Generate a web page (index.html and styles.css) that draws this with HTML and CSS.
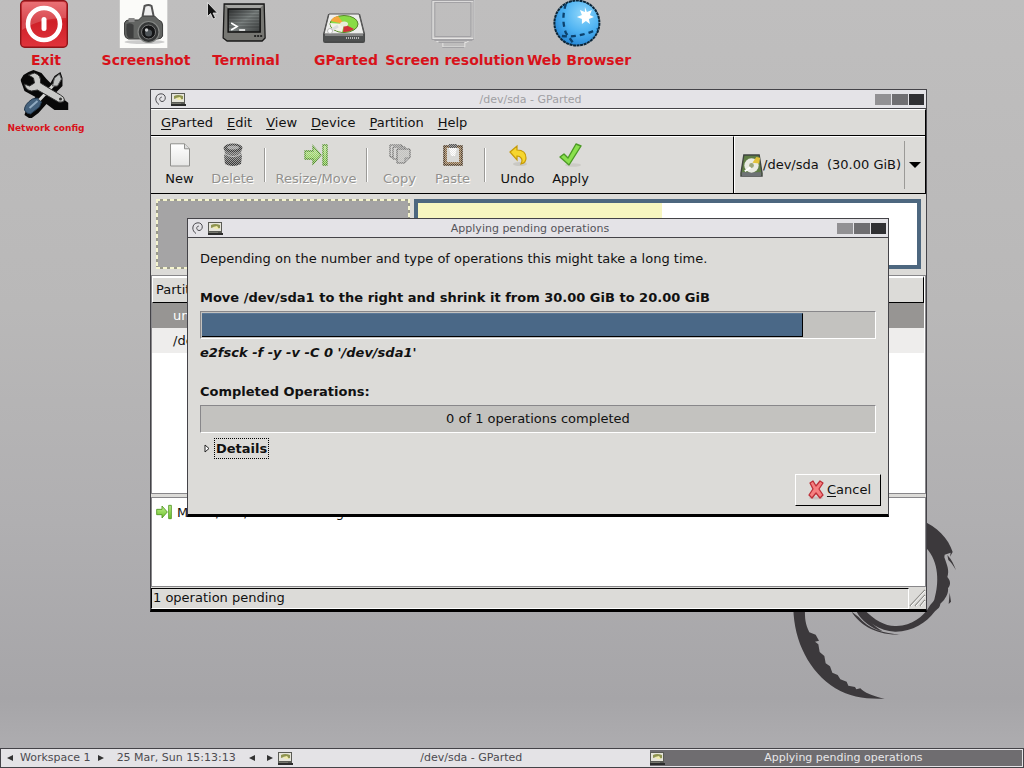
FILE: index.html
```html
<!DOCTYPE html>
<html lang="en">
<head>
<meta charset="utf-8">
<title>GParted</title>
<link rel="stylesheet" href="styles.css">
</head>
<body>
<svg class="defs" width="0" height="0" aria-hidden="true">
  <defs>
    <pattern id="dither" width="2" height="2" patternUnits="userSpaceOnUse"><path d="M0 0h1v1H0zM1 1h1v1H1z" fill="#dcdbd8" shape-rendering="crispEdges"/></pattern>
    <linearGradient id="red" x1="0" y1="0" x2="0" y2="1"><stop offset="0" stop-color="#e8555a"/><stop offset=".45" stop-color="#cf2028"/><stop offset="1" stop-color="#e0343c"/></linearGradient>
    <linearGradient id="dark" x1="0" y1="0" x2="0" y2="1"><stop offset="0" stop-color="#7c7c7c"/><stop offset="1" stop-color="#2b2b2b"/></linearGradient>
    <linearGradient id="screen" x1="0" y1="0" x2="1" y2="1"><stop offset="0" stop-color="#303232"/><stop offset=".5" stop-color="#7d8382"/><stop offset="1" stop-color="#3c3f3f"/></linearGradient>
    <radialGradient id="globe" cx=".62" cy=".3" r=".75"><stop offset="0" stop-color="#8ed6fb"/><stop offset=".55" stop-color="#4db2f2"/><stop offset="1" stop-color="#2384d4"/></radialGradient>
    <linearGradient id="green" x1="0" y1="0" x2="0" y2="1"><stop offset="0" stop-color="#c0f08c"/><stop offset="1" stop-color="#6bc22b"/></linearGradient>
    <linearGradient id="paper" x1="0" y1="0" x2="0" y2="1"><stop offset="0" stop-color="#fff"/><stop offset="1" stop-color="#e6e6e4"/></linearGradient>
    <symbol id="swirl" viewBox="0 0 11 12"><path d="M4 11.500C1.800 10 .8 8 .8 6C.8 3 3 .8 6 .8C8.600.8 10.300 2.500 10.300 4.800C10.300 7.200 8.600 8.600 7 8.500C5.300 8.400 4.500 7 4.800 5.600C5.100 4.500 6 4 6.900 4.200" fill="none" stroke="#4c4b50" stroke-width="1"/></symbol>
    <symbol id="app" viewBox="0 0 15 13"><path d="M0 0h14v12H0z" fill="#5a5b55"/><path d="M1 1h12v8H1z" fill="#e6e5da"/><path d="M3 3q4-2 9 0v3l-3 1-3-2-3 1z" fill="#8f9450"/><path d="M5 5l4-1 2 3H7z" fill="#f0ecae"/><path d="M1 10h9v1H1z" fill="#77786f"/><path d="M0 11h15v2H0z" fill="#2c2c2c"/></symbol>
    <symbol id="move" viewBox="0 0 24 24"><path d="M1 8h8V3l8 9-8 9v-5H1z" fill="url(#green)" stroke="#4f9422" stroke-width="1.300"/><path d="M19 2h4v20h-4z" fill="url(#green)" stroke="#4f9422" stroke-width="1.300"/></symbol>
  </defs>
</svg>
<main class="desktop">
  <svg class="wallpaper" viewBox="0 0 732 750" aria-hidden="true">
    <g fill="#3c393c">
      <path d="M425 182C470 198 506 236 518 276L510 290L512 278L494 284L493 292C501 315 509 332 502 351C514 364 511 378 504 384C506 399 498 411 492 420L481 431C480 445 470 447 463 456C440 488 395 516 345 515C298 512 263 488 235 450L252 448C285 483 318 500 350 498C396 497 431 469 447 441C453 430 463 425 464 414C476 372 479 306 438 263C415 240 400 220 390 210Z"/>
      <path d="M502 285C515 299 522 314 528 331C519 315 513 307 505 300ZM509 398L513 425L506 432Z"/>
      <path d="M215 455C236 491 287 527 362 523C311 520 266 508 235 470ZM230 455C243 480 275 507 308 514C277 494 259 475 245 452Z"/>
      <path d="M40 445C42 545 88 636 166 685C211 711 256 718 314 716C277 709 252 697 241 685L229 688L225 681L205 677L200 665L181 658L173 645L157 638L150 619L137 610L133 588L119 576L115 553L105 545L117 542L107 524L88 517C76 493 74 475 75 445Z"/>
    </g>
  </svg>

  <nav aria-label="Desktop">
    <a class="launcher exit" href="#exit"><svg viewBox="0 0 48 48"><rect x=".7" y=".7" width="46.600" height="46.600" rx="4" fill="url(#red)" stroke="#8e1519" stroke-width="1.400"/><path d="M2 6q0-4 4-4h36q4 0 4 4v12Q20 18 2 30z" fill="#fff" opacity=".18"/><circle cx="24" cy="24" r="16" fill="none" stroke="#fff" stroke-width="4.500"/><path d="M24 19.500v9" stroke="#fff" stroke-width="5" stroke-linecap="round"/></svg><span>Exit</span></a>
    <a class="launcher shot" href="#screenshot"><svg viewBox="0 0 48 48"><path d="M0 0h48v48H0z" fill="#fbfbf9"/><ellipse cx="25" cy="42" rx="20" ry="2" fill="#ccc"/><path d="M23 16l2-10q4-2 7 0l2 10" fill="#eee" stroke="#555" stroke-width="2"/><path d="M5 23q1-3 4-3h10l4-4h12l4 4q4 1 4 5v11q-1 3-5 3H9q-4-1-4-5z" fill="#626462" stroke="#3a3b3a"/><path d="M9 18h6v4H9z" fill="#888"/><path d="M7 24q4-2 7 1v13H9q-3-2-2-14z" fill="#3d3e3e"/><circle cx="29" cy="32" r="10.500" fill="#363838" stroke="#858785" stroke-width="1.200"/><circle cx="29" cy="32" r="7" fill="#141516" stroke="#777"/><circle cx="29" cy="33" r="3.500" fill="#4d5357"/><circle cx="27" cy="30" r="1.700" fill="#c8cacc"/></svg><span>Screenshot</span></a>
    <a class="launcher term" href="#terminal"><svg viewBox="0 0 48 48"><path d="M4 4h40l1 34-3 3H7l-4-3z" fill="#777773" stroke="#191919" stroke-width="1.300"/><path d="M5 5h38l-3 3H8z" fill="#a5a5a2"/><path d="M8 9h32v23H8z" fill="url(#screen)" stroke="#111" stroke-width="1.500"/><path d="M9 12h30M9 15h30M9 18h30M9 21h30M9 24h30M9 27h30" stroke="#202323" opacity=".4"/><path d="M11 23l6 3.500-6 3.500M19 30h6" stroke="#fff" stroke-width="1.600" fill="none"/><path d="M34 36h8" stroke="#252525" stroke-width="2" stroke-dasharray="2 1"/></svg><span>Terminal</span></a>
    <a class="launcher gp" href="#gparted"><svg viewBox="0 0 48 48"><path d="M8 14h32l5 20v7q0 2-2 2H5q-2 0-2-2v-7z" fill="#494a4a"/><path d="M9 14h30l5 20H4z" fill="#eeeeec" stroke="#555" stroke-width="1"/><path d="M4 35h40v6H4z" fill="#4e5050"/><path d="M5 35h38" stroke="#bbb"/><ellipse cx="24" cy="24" rx="14" ry="8.500" fill="#88dc45" stroke="#57822d"/><path d="M24 24L11 21q1-4 7-5z" fill="#f6a63d"/><path d="M24 24l-14-1q0 7 12 9z" fill="#f4f1ea"/><path d="M24 24l-1 8q7 0 11-3z" fill="#cf3038"/><ellipse cx="24" cy="24" rx="4" ry="2.500" fill="#e7edd8"/><path d="M10 31l8-5" stroke="#ddd" stroke-width="3"/><circle cx="10" cy="31" r="2.500" fill="#fff" stroke="#999" stroke-width=".6"/><path d="M26 38h14" stroke="#bbb" stroke-width="2" stroke-dasharray="1 1"/></svg><span>GParted</span></a>
    <a class="launcher res" href="#resolution"><svg viewBox="0 0 48 48" fill="none" stroke-width="1"><path d="M3.500 1v37.500h41V1z" stroke="#e5e4e3" stroke-width="1.500"/><path d="M2.500.5v39h42V.5zM5.500 2.500v34h36v-34z" stroke="#a3a2a5"/><path d="M6 40.500h34l-3 2H10zM13.500 43v4h22v-4" stroke="#e5e4e3"/><path d="M5 40.500h38M9 42.500h26M13 47.500h22" stroke="#a3a2a5"/></svg><span>Screen resolution</span></a>
    <a class="launcher web" href="#browser"><svg viewBox="0 0 48 48"><circle cx="24" cy="23" r="22.500" fill="url(#globe)" stroke="#0b2639" stroke-width="2" stroke-dasharray="3 .6"/><path d="M13 4q-5 15 0 29l8 11M9 36q17 2 36-7" fill="none" stroke="#0c426e" stroke-width="2.300" stroke-dasharray="5 4"/><path d="M32 7l2 5 5-2-2 5 4 2-5 2 1 5-4-3-4 3v-5l-5-2 5-2-2-5 5 2z" fill="#fff"/></svg><span>Web Browser</span></a>
    <a class="launcher net" href="#network"><svg viewBox="0 0 48 48"><path d="M0 10l3-5 5-3 5-2 8 3 5 6 4 4 4-7 6-4 2 6 0 8-7 7 13 10v7H34l-8-6-8 9-8 6-6-4 3-10 8-8L4 21z" fill="#080808"/><path d="M4 40q0-6 8-11l5-1 4 4-2 5-9 7q-4 0-6-4z" fill="#45627d" stroke="#23394e"/><path d="M9 38l8-7" stroke="#91abc1" stroke-width="2"/><path d="M19 30l14-15" stroke="#d4d5d3" stroke-width="3"/><path d="M32 16l2-8 5-4 2 5-4 7z" fill="#bfc1c0" stroke="#555"/><path d="M8 5l5 3 1 5-5 3-5-2q1 6 7 7l6-1 21 12q5 1 6-2 0-3-4-5L20 13q1-8-6-10z" fill="#c9cac8" stroke="#333"/><circle cx="40" cy="29" r="1.500" fill="#333"/></svg><span>Network config</span></a>
  </nav>

  <section class="window main-window" aria-label="/dev/sda - GParted">
    <header class="titlebar inactive"><svg class="swirl"><use href="#swirl"/></svg><svg class="app"><use href="#app"/></svg><h1>/dev/sda - GParted</h1><div class="winbtns"><button aria-label="Minimize"></button><button aria-label="Maximize"></button><button aria-label="Close"></button></div></header>
    <nav class="menubar" aria-label="Menu"><button><u>G</u>Parted</button><button><u>E</u>dit</button><button><u>V</u>iew</button><button><u>D</u>evice</button><button><u>P</u>artition</button><button><u>H</u>elp</button></nav>
    <div class="toolrow">
      <div class="toolbar">
        <button><svg viewBox="0 0 24 24"><path d="M2.500.8h14l5 5V23h-19z" fill="url(#paper)" stroke="#8f8f8c"/><path d="M16.500.8v5h5" fill="#ddd" stroke="#8f8f8c"/></svg>New</button>
        <button disabled><svg viewBox="0 0 24 24"><path d="M3 6l1 4-1 3 1 8q8 4 16 0l1-8-1-3 1-4z" fill="url(#dark)"/><ellipse cx="12" cy="5" rx="9.500" ry="4.500" fill="#3d3d3d"/><ellipse cx="12" cy="4.500" rx="6" ry="2" fill="#999"/><path d="M4 11q8 5 16 0" stroke="#bbb" fill="none"/><path d="M0 0h24v24H0z" fill="url(#dither)" opacity=".6"/></svg>Delete</button>
        <i class="sep"></i>
        <button class="wide" disabled><svg viewBox="0 0 24 24"><use href="#move" width="24" height="24"/><path d="M0 0h24v24H0z" fill="url(#dither)" opacity=".7"/></svg>Resize/Move</button>
        <i class="sep"></i>
        <button disabled><svg viewBox="0 0 24 24"><path d="M2 2h12v12H2z" fill="#d2d2d0" stroke="#555"/><path d="M5 4h12v12H5z" fill="#d2d2d0" stroke="#555"/><path d="M9 6h13v9l-5 5H9z" fill="#c2c2c0" stroke="#555"/><path d="M17 20v-5h5" fill="#aaa" stroke="#777"/><path d="M0 0h24v24H0z" fill="url(#dither)" opacity=".6"/></svg>Copy</button>
        <button disabled><svg viewBox="0 0 24 24"><path d="M3 3h18v19H3z" fill="#8a6a45" stroke="#453018" stroke-width="1.500"/><path d="M6 5h12v14H6z" fill="#d8d8d6"/><path d="M8 5h8l-2 8h-4z" fill="#fff"/><path d="M8 1h8v4H8z" fill="#555"/><path d="M0 0h24v24H0z" fill="url(#dither)" opacity=".6"/></svg>Paste</button>
        <i class="sep"></i>
        <button><svg viewBox="0 0 24 24"><ellipse cx="14" cy="21" rx="7" ry="2" fill="#c9c8c3"/><path d="M4 9l7-6v4q9 0 9 8 0 5-5 6 2-4 0-6-1-2-4-2v4z" fill="#f6d62e" stroke="#c69a08" stroke-width="1.200"/></svg>Undo</button>
        <button><svg viewBox="0 0 24 24"><ellipse cx="14" cy="22" rx="8" ry="1.700" fill="#cccbc6"/><path d="M1 14l4-3 4 4 8-14 5 2-12 19z" fill="#8be04e" stroke="#4c9a25" stroke-width="1.400" stroke-linejoin="round"/></svg>Apply</button>
      </div>
      <label class="device"><svg viewBox="0 0 24 24"><path d="M4 1h16l3 19v3H1v-3z" fill="#5f7d45" stroke="#3f4440" stroke-width="1.400"/><path d="M2 19h20v4H2z" fill="#6e7275"/><circle cx="12" cy="12" r="7.500" fill="#e9ebe3"/><path d="M13 9l4-6 4 1-1 6z" fill="#e3c33a"/><circle cx="12" cy="12" r="2.500" fill="#9aa57c"/><path d="M5 18l6-4" stroke="#fff" stroke-width="2"/></svg><select aria-label="Device"><option>/dev/sda &nbsp;(30.00 GiB)</option></select><span class="arrow"></span></label>
    </div>
    <div class="disk"><div class="unalloc"></div><div class="sda1"><div class="used"></div></div></div>
    <div class="tree">
      <table><thead><tr><th>Partition</th></tr></thead><tbody><tr class="selected"><td>unallocated</td></tr><tr class="alt"><td>/dev/sda1</td></tr></tbody></table>
    </div>
    <div class="oplist"><svg><use href="#move"/></svg><span>Move /dev/sda1 to the right and shrink it from 30.00 GiB to 20.00 GiB</span></div>
    <footer class="status"><span>1 operation pending</span><svg viewBox="0 0 17 19"><path d="M1 18L16 2M6 18L16 7M11 18l5-6" stroke="#8d8c88" stroke-width="1.300"/><path d="M2 18L16 3M7 18l9-10M12 18l4-5" stroke="#fff"/></svg></footer>
  </section>

  <section class="window dialog" role="dialog" aria-label="Applying pending operations">
    <header class="titlebar"><svg class="swirl"><use href="#swirl"/></svg><svg class="app"><use href="#app"/></svg><h2>Applying pending operations</h2><div class="winbtns"><button aria-label="Minimize"></button><button aria-label="Maximize"></button><button aria-label="Close"></button></div></header>
    <div class="body">
      <p>Depending on the number and type of operations this might take a long time.</p>
      <h3>Move /dev/sda1 to the right and shrink it from 30.00 GiB to 20.00 GiB</h3>
      <div class="bar" role="progressbar" aria-label="Current operation" aria-valuenow="89"><div class="fill" style="width:89.400%"></div></div>
      <p class="cmd">e2fsck -f -y -v -C 0 '/dev/sda1'</p>
      <h3>Completed Operations:</h3>
      <div class="bar" role="progressbar" aria-label="Completed operations" aria-valuenow="0"><span>0 of 1 operations completed</span></div>
      <button class="details"><svg viewBox="0 0 6 9"><path d="M1 1v7l4-3.500z" fill="#fff" stroke="#222"/></svg><b>Details</b></button>
      <div class="actions"><button class="cancel"><svg viewBox="0 0 18 20"><ellipse cx="9" cy="18" rx="7" ry="1.500" fill="#c9bfbd"/><path d="M3 3l3-2 3 5 4-5 3 2-4 6 4 6-3 3-4-5-4 5-3-3 4-6z" fill="#f67f80" stroke="#bd2f38" stroke-width="1.300" stroke-linejoin="round"/></svg><span><u>C</u>ancel</span></button></div>
    </div>
  </section>

  <svg class="pointer" viewBox="0 0 12 18" aria-hidden="true"><path d="M.5.5v14l3-3 2.500 5.500 2.500-1-2.500-5h4.500z" fill="#111" stroke="#eee" stroke-width=".8"/></svg>

  <footer class="taskbar">
    <div class="ws"><button class="prev" aria-label="Previous workspace"></button><span>Workspace 1</span><button class="next" aria-label="Next workspace"></button></div>
    <time>25 Mar, Sun 15:13:13</time>
    <div class="nav"><button class="prev" aria-label="Previous window"></button><button class="next" aria-label="Next window"></button></div>
    <button class="task"><svg class="app"><use href="#app"/></svg><span>/dev/sda - GParted</span></button>
    <button class="task active"><svg class="app"><use href="#app"/></svg><span>Applying pending operations</span></button>
  </footer>
</main>
</body>
</html>
```

FILE: styles.css
```css
* { box-sizing: border-box; }
body { margin: 0; font: 13px/16px "DejaVu Sans", sans-serif; color: #111; }
h1, h2, h3, p { margin: 0; font-size: 13px; }
button, select { font: inherit; color: inherit; background: none; border: 0; padding: 0; margin: 0; }
svg { display: block; flex: none; }
u { text-underline-offset: 2px; }
.defs { position: absolute; }

.desktop {
  position: relative; min-height: 100vh; overflow: hidden;
  display: flex; flex-direction: column; justify-content: flex-end;
  background: linear-gradient(#bfbebe 0, #b9b8b8 40%, #b0afb1 68%, #a6a5a8 91%, #adacaf 97%);
}
.wallpaper { position: absolute; left: 780px; top: 460px; width: 244px; height: 250px; }

.launcher {
  position: absolute; top: 0; transform: translateX(-50%);
  display: flex; flex-direction: column; align-items: center; gap: 4px;
  color: #d8121a; font-weight: bold; font-size: 14px; text-decoration: none; white-space: nowrap;
}
.launcher svg { width: 48px; height: 48px; margin-right: 4px; }
.exit { left: 46px; }
.shot { left: 146px; }
.term { left: 246px; }
.gp { left: 346px; }
.res { left: 455px; }
.web { left: 579px; }
.net { left: 46px; top: 70px; gap: 2px; font-size: 9px; }

.window { position: absolute; background: #dcdbd8; border: 1px solid #444348; border-bottom: 3px solid #000; }
.main-window { left: 150px; right: 97px; top: 89px; }
.dialog { left: 187px; right: 135px; top: 218px; }

.titlebar { display: flex; align-items: center; gap: 5px; height: 19px; padding: 0 2px 0 4px; background: #e4e3e7; border-bottom: 1px solid #444348; color: #55545a; }
.titlebar h1, .titlebar h2 { flex: 1; padding-top: 1px; text-align: center; font-size: 11px; font-weight: normal; }
.inactive { color: #a09fa3; }
.swirl { width: 11px; height: 12px; }
.app { width: 15px; height: 13px; }
.winbtns { display: flex; gap: 1px; }
.winbtns button { width: 16px; height: 11px; background: #929194; }
.winbtns button + button { background: #6f6e71; }
.winbtns button + button + button { width: 15px; background: #303033; }

.menubar { display: flex; height: 27px; padding: 0 3px; border-top: 1px solid #fff; border-bottom: 1px solid #000; border-right: 1px solid #000; }
.menubar button { padding: 0 7px; }

.toolrow { display: flex; height: 58px; border-bottom: 1px solid #000; border-right: 1px solid #000; }
.toolbar { flex: 1; display: flex; padding: 6px 2px; border-top: 1px solid #fff; border-right: 1px solid #000; }
.toolbar button { width: 53px; display: flex; flex-direction: column; align-items: center; gap: 4px; }
.toolbar .wide { width: 90px; }
.toolbar svg { width: 24px; height: 24px; }
.toolbar button:disabled { color: #92918e; text-shadow: 1px 1px #fff; }
.sep { width: 2px; margin: 5px; border-left: 1px solid #9b9a97; border-right: 1px solid #fff; }
.device { width: 191px; display: flex; align-items: center; padding-left: 5px; border-top: 1px solid #fff; border-left: 1px solid #fff; }
.device svg { width: 23px; height: 23px; }
.device select { flex: 1; min-width: 0; appearance: none; white-space: pre; }
.arrow { width: 21px; height: 48px; display: flex; align-items: center; padding-left: 4px; border-left: 1px solid #9b9a97; }
.arrow::before { content: ""; border: 6px solid transparent; border-top-color: #000; border-bottom: 0; }

.disk { display: grid; grid-template-columns: 1fr 2fr; gap: 4px; height: 81px; padding: 5px; }
.unalloc {
  height: 70px;
  background:
    repeating-linear-gradient(90deg, #f5f4cf 0 4px, #9b9b8b 4px 7px) top / 100% 2px no-repeat,
    repeating-linear-gradient(90deg, #f5f4cf 0 4px, #9b9b8b 4px 7px) bottom / 100% 2px no-repeat,
    repeating-linear-gradient(#f5f4cf 0 4px, #9b9b8b 4px 7px) left / 2px 100% no-repeat,
    repeating-linear-gradient(#f5f4cf 0 4px, #9b9b8b 4px 7px) right / 2px 100% no-repeat,
    #a5a4a5;
}
.sda1 { height: 70px; background: #fff; border: 4px solid #4d677f; }
.used { width: 49%; height: 100%; background: #f7f6c0; }

.tree { height: 219px; padding-right: 1px; background: #fff; border: 1px solid #88878a; }
.tree table { width: 100%; border-collapse: separate; border-spacing: 0; }
.tree th { height: 27px; padding: 0 3px; text-align: left; font-weight: normal; background: #dcdbd8; border: 1px solid #000; border-top: 2px solid #fff; border-left-color: #fff; border-bottom: 1px solid #000; }
.tree td { height: 25px; padding: 0 21px; }
.selected { background: #979593; color: #fff; }
.alt { background: #eeedec; }
.oplist { display: flex; gap: 5px; height: 90px; margin-top: 3px; padding: 6px 4px; background: #fff; border: 1px solid #88878a; white-space: nowrap; }
.oplist svg { width: 16px; height: 16px; }
.oplist span { line-height: 18px; }
.status { display: flex; height: 22px; padding-top: 1px; }
.status span { flex: 1; padding: 0 1px; line-height: 18px; border: 1px solid #fff; border-top-color: #000; border-left-color: #000; }
.status svg { width: 17px; height: 19px; }

.dialog .body { padding: 13px 12px 8px; display: flex; flex-direction: column; }
.body h3 { margin: 23px 0 5px; }
.bar { height: 28px; padding: 1px; background: #c3c2bf; border: 1px solid #88878a; border-right-color: #fff; border-bottom-color: #fff; text-align: center; line-height: 24px; }
.fill { height: 100%; background: #4a6887; border-right: 1px solid #000; border-bottom: 1px solid #000; border-top: 1px solid #5b7898; }
.cmd { margin-top: 6px; font-weight: bold; font-style: italic; }
.details { align-self: flex-start; display: flex; align-items: center; gap: 4px; margin-top: 5px; padding-left: 4px; }
.details svg { width: 6px; height: 9px; }
.details b { padding: 1px; border: 1px dotted #000; line-height: 17px; }
.actions { display: flex; justify-content: flex-end; margin: 15px -5px 0 0; }
.cancel { display: flex; align-items: center; gap: 2px; height: 32px; padding: 0 9px 0 11px; border: 1px solid #fff; border-right: 1px solid #000; border-bottom: 1px solid #000; }
.cancel svg { width: 18px; height: 20px; }

.pointer { position: absolute; left: 207px; top: 2px; width: 12px; height: 18px; }

.taskbar { display: flex; align-items: center; height: 20px; padding: 0 1px 0 6px; background: #e4e3e6; border: 1px solid #444348; color: #4c4b50; font-size: 11px; line-height: 16px; white-space: nowrap; }
.ws, .nav { display: flex; align-items: center; gap: 7px; }
.prev, .next { border: 3px solid transparent; }
.prev { border-right: 6px solid #333; border-left: 0; }
.next { border-left: 6px solid #333; border-right: 0; }
.taskbar time { margin: 0 13px; }
.nav { gap: 12px; margin-right: 5px; }
.task { flex: 1; display: flex; align-items: center; height: 16px; }
.task span { flex: 1; text-align: center; }
.active { background: #6f6d70; color: #e8e7e9; }
```
